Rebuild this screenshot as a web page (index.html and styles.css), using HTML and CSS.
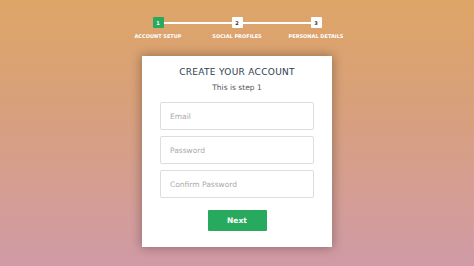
FILE: index.html
```html
<!DOCTYPE html>
<html>
<head>
<meta charset="utf-8">
<link rel="stylesheet" href="styles.css">
</head>
<body>
<div class="page">
  <div class="progress">
    <div class="track">
      <span class="dot active">1</span>
      <span class="line"></span>
      <span class="dot">2</span>
      <span class="line"></span>
      <span class="dot">3</span>
    </div>
    <div class="labels">
      <span>Account Setup</span>
      <span>Social Profiles</span>
      <span>Personal Details</span>
    </div>
  </div>
  <form class="card">
    <h2 class="title">CREATE YOUR ACCOUNT</h2>
    <h3 class="subtitle">This is step 1</h3>
    <input class="field" type="text" placeholder="Email">
    <input class="field" type="password" placeholder="Password">
    <input class="field" type="password" placeholder="Confirm Password">
    <button class="next" type="button">Next</button>
  </form>
</div>
</body>
</html>
```

FILE: styles.css
```css
html, body {
  margin: 0;
  padding: 0;
  height: 100%;
}
body {
  background: linear-gradient(180deg, #dea567 0%, #d8a07b 40%, #d49d99 80%, #d09aa6 100%);
  font-family: "DejaVu Sans", "Open Sans", sans-serif;
}
.page {
  display: flex;
  flex-direction: column;
  align-items: center;
  padding-top: 17px;
}
.progress {
  display: flex;
  flex-direction: column;
  align-items: center;
}
.track {
  display: flex;
  align-items: center;
}
.dot {
  width: 11px;
  height: 11px;
  background: #fff;
  color: #333;
  font-size: 5px;
  font-weight: bold;
  display: flex;
  align-items: center;
  justify-content: center;
  border-radius: 1px;
}
.dot.active {
  background: #27aa5e;
  color: #fff;
}
.line {
  width: 68px;
  height: 2px;
  background: #fff;
}
.labels {
  display: flex;
  margin-top: 5px;
}
.labels span {
  width: 79px;
  text-align: center;
  font-size: 5px;
  font-weight: bold;
  color: #fff;
  text-transform: uppercase;
  letter-spacing: 0;
}
.card {
  margin-top: 17px;
  width: 190px;
  box-sizing: border-box;
  background: #fff;
  box-shadow: 0 0 10px 1px rgba(0,0,0,0.3);
  padding: 11px 18px 16px;
  display: flex;
  flex-direction: column;
  align-items: center;
}
.title {
  margin: 0;
  font-size: 9px;
  font-weight: normal;
  color: #2c3e50;
  letter-spacing: 0.3px;
}
.subtitle {
  margin: 6px 0 10px;
  font-size: 7.5px;
  font-weight: normal;
  color: #555;
}
.field {
  width: 154px;
  height: 28px;
  box-sizing: border-box;
  border: 1px solid #ddd;
  border-radius: 2px;
  padding: 0 9px;
  margin: 0 0 6px;
  font-family: inherit;
  font-size: 7.5px;
  color: #2c3e50;
}
.field::placeholder {
  color: #aaa;
}
.next {
  margin-top: 6px;
  width: 59px;
  height: 21px;
  border: none;
  border-radius: 1px;
  background: #27aa5e;
  color: #fff;
  font-family: inherit;
  font-size: 7.5px;
  font-weight: bold;
}
```
